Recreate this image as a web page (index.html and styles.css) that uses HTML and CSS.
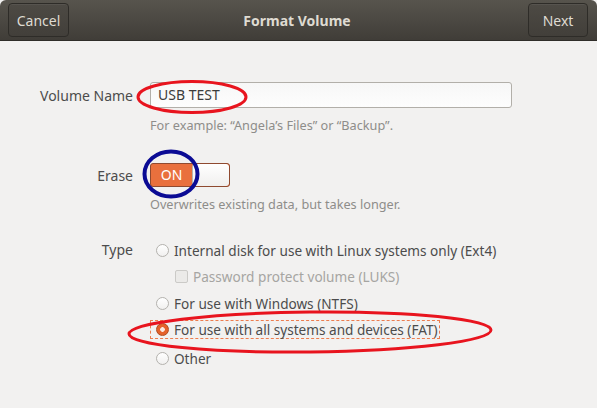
FILE: index.html
```html
<!DOCTYPE html>
<html>
<head>
<meta charset="utf-8">
<link rel="stylesheet" href="styles.css">
</head>
<body>
<div class="window">
  <header class="headerbar">
    <button class="hb-btn cancel">Cancel</button>
    <div class="title">Format Volume</div>
    <button class="hb-btn next">Next</button>
  </header>
  <main class="form">
    <div class="label lbl-name">Volume Name</div>
    <div class="field">
      <div class="entry">USB TEST</div>
      <div class="hint hint-name">For example: “Angela’s Files” or “Backup”.</div>
    </div>

    <div class="label lbl-erase">Erase</div>
    <div class="field">
      <div class="switch"><span class="sw-on">ON</span><span class="sw-knob"></span></div>
      <div class="hint hint-erase">Overwrites existing data, but takes longer.</div>
    </div>

    <div class="label lbl-type">Type</div>
    <div class="field options">
      <div class="opt"><span class="radio"></span><span>Internal disk for use with Linux systems only (Ext4)</span></div>
      <div class="opt sub disabled"><span class="check"></span><span>Password protect volume (LUKS)</span></div>
      <div class="opt"><span class="radio"></span><span>For use with Windows (NTFS)</span></div>
      <div class="opt focused"><span class="radio on"></span><span>For use with all systems and devices (FAT)</span></div>
      <div class="opt"><span class="radio"></span><span>Other</span></div>
    </div>
  </main>

  <svg class="marks" width="597" height="408" viewBox="0 0 597 408">
    <ellipse cx="192" cy="97" rx="54" ry="15.5" fill="none" stroke="#e8141e" stroke-width="3"/>
    <ellipse cx="171" cy="174" rx="26.5" ry="22.5" fill="none" stroke="#0b0b94" stroke-width="4"/>
    <ellipse cx="310" cy="332" rx="181" ry="20" fill="none" stroke="#e8141e" stroke-width="3" transform="rotate(-0.6 310 332)"/>
  </svg>
</div>
</body>
</html>
```
FILE: styles.css
```css
html, body {
  margin: 0;
  padding: 0;
}
body {
  background: #f2f1f0;
  font-family: "Noto Sans", "DejaVu Sans", sans-serif;
  font-size: 14px;
  color: #4c4c4c;
}
.window {
  position: relative;
  width: 597px;
  height: 408px;
  overflow: hidden;
  background: #f2f1f0;
}
.headerbar {
  height: 41px;
  box-sizing: border-box;
  display: grid;
  grid-template-columns: 1fr auto 1fr;
  align-items: center;
  padding: 0 9px 0 8px;
  background: linear-gradient(#57544d, #403d38);
  border-radius: 6px 6px 0 0;
  border-bottom: 1px solid #2f2d29;
}
.hb-btn {
  height: 34px;
  box-sizing: border-box;
  padding: 0;
  border: 1px solid #2e2c28;
  border-radius: 4px;
  background: linear-gradient(#4d4a44, #423f3a);
  box-shadow: inset 0 1px rgba(255,255,255,0.06);
  color: #dfdbd2;
  font-family: inherit;
  font-size: 14px;
}
.cancel { width: 61px; justify-self: start; }
.next { width: 60px; justify-self: end; }
.title {
  color: #dfdbd2;
  font-weight: bold;
  font-size: 14px;
  padding-left: 2px;
  padding-right: 4px;
}
.form {
  display: grid;
  grid-template-columns: 133px 1fr;
  column-gap: 17px;
  padding: 41px 85px 0 0;
}
.label {
  text-align: right;
  color: #4c4c4c;
}
.lbl-name { padding-top: 4px; }
.lbl-erase { padding-top: 32px; }
.lbl-type { padding-top: 27px; }
.entry {
  height: 26px;
  box-sizing: border-box;
  border: 1px solid #b2afa9;
  border-radius: 3px;
  background: linear-gradient(#f7f7f7, #fdfdfd);
  padding: 2px 7px;
  color: #3c3c3c;
  line-height: 20px;
}
.hint {
  font-size: 12.7px;
  color: #8e8d8a;
}
.hint-name { margin-top: 8px; }
.switch {
  margin-top: 29px;
  width: 80px;
  height: 24px;
  box-sizing: border-box;
  border: 1px solid #8f4a30;
  border-radius: 3px;
  display: flex;
  overflow: hidden;
  background: #e9703d;
}
.sw-on {
  width: 41px;
  text-align: center;
  color: #fff;
  line-height: 22px;
  font-size: 14px;
}
.sw-knob {
  flex: 1;
  background: linear-gradient(#ffffff, #f0efee);
  border-left: 1px solid #b8b5b0;
  border-radius: 3px;
}
.hint-erase { margin-top: 8px; }
.options {
  padding-top: 24px;
  display: flex;
  flex-direction: column;
}
.opt {
  display: flex;
  align-items: center;
  gap: 5px;
  height: 26.5px;
  font-size: 13.6px;
  color: #4c4c4c;
  align-self: flex-start;
  box-sizing: border-box;
  padding: 0 1px 0 6px;
}
.opt.sub { padding-left: 25px; }
.opt.disabled { color: #a6a5a2; }
.opt.focused {
  height: 19px;
  margin: 3px 0 7px;
  border: 1px dashed #ec7d4f;
  padding: 0 1px 0 5px;
}
.radio {
  width: 13px;
  height: 13px;
  box-sizing: border-box;
  border-radius: 50%;
  border: 1px solid #b4b2ae;
  background: linear-gradient(#ffffff, #f1f0ef);
  flex: none;
}
.radio.on {
  border-color: #b04b1f;
  background: radial-gradient(circle, #fbe8df 0 2px, #e5622b 2.6px);
}
.check {
  width: 13px;
  height: 13px;
  box-sizing: border-box;
  border: 1px solid #cbcac7;
  border-radius: 2px;
  background: #ebeae8;
  flex: none;
}
.marks {
  position: absolute;
  left: 0;
  top: 0;
  pointer-events: none;
}
```
